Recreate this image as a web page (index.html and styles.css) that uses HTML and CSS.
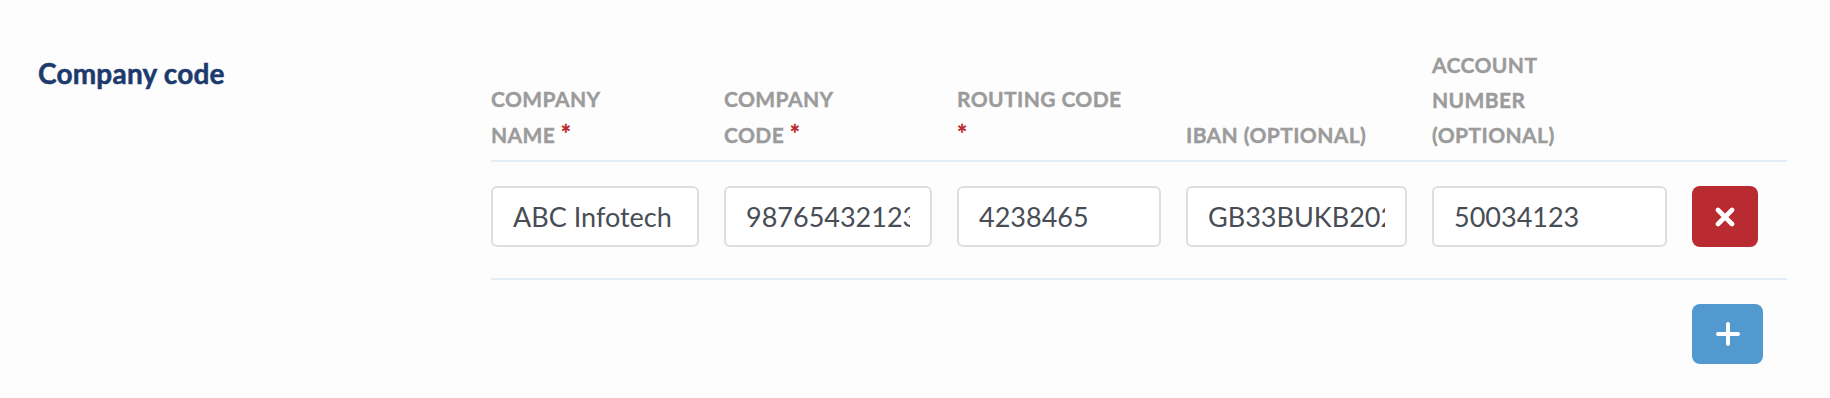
FILE: index.html
```html
<!DOCTYPE html>
<html lang="en">

<head>
    <meta charset="UTF-8">
    <meta name="viewport" content="width=device-width, initial-scale=1.0">
    <title>Company code</title>
    <link rel="stylesheet" href="styles.css">
</head>

<body>
    <div class="section">
        <h2 class="section-title">Company code</h2>
        <div class="codes">
            <div class="codes-head">
                <div class="label">Company<br>name <span class="req">*</span></div>
                <div class="label">Company<br>code <span class="req">*</span></div>
                <div class="label">Routing code<br><span class="req">*</span></div>
                <div class="label">IBAN (optional)</div>
                <div class="label">Account<br>number<br>(optional)</div>
                <div></div>
            </div>
            <div class="codes-row">
                <input class="field" type="text" value="ABC Infotech">
                <input class="field" type="text" value="987654321234">
                <input class="field" type="text" value="4238465">
                <input class="field" type="text" value="GB33BUKB20201555555555">
                <input class="field" type="text" value="50034123">
                <button class="btn btn-remove" type="button">
                    <svg width="20" height="20" viewBox="0 0 20 20">
                        <path d="M3 3 L17 17 M17 3 L3 17" stroke="#fff" stroke-width="4.6" stroke-linecap="round" fill="none"/>
                    </svg>
                </button>
            </div>
            <div class="codes-foot">
                <button class="btn btn-add" type="button">
                    <svg width="24" height="24" viewBox="0 0 24 24">
                        <path d="M2 12 H22 M12 2 V22" stroke="#fff" stroke-width="4" stroke-linecap="round" fill="none"/>
                    </svg>
                </button>
            </div>
        </div>
    </div>
</body>

</html>
```

FILE: styles.css
```css
body {
    margin: 0;
    background-color: #fdfdfd;
    font-family: Lato, "Open Sans", sans-serif;
}

.section {
    display: flex;
    align-items: flex-start;
    padding: 47px 0 0 38px;
}

.section-title {
    flex: 0 0 453px;
    margin: 10px 0 0;
    font-size: 28px;
    line-height: 1.2;
    font-weight: 700;
    letter-spacing: 0.2px;
    color: #1c3a6d;
    -webkit-text-stroke: 0.5px #1c3a6d;
}

.codes {
    width: 1296px;
}

.codes-head,
.codes-row,
.codes-foot {
    display: grid;
    grid-template-columns: 208px 208px 204px 221px 235px 66px;
    column-gap: 25px;
}

.codes-head {
    align-items: end;
    padding-bottom: 8px;
    border-bottom: 2px solid #e3edf7;
}

.label {
    font-size: 21px;
    line-height: 35px;
    font-weight: 700;
    letter-spacing: 0.4px;
    text-transform: uppercase;
    color: #9b9b9b;
    -webkit-text-stroke: 0.4px #9b9b9b;
}

.label .req {
    color: #b8282e;
    font-size: 24px;
    -webkit-text-stroke: 0.4px #b8282e;
}

.codes-row {
    align-items: center;
    padding: 24px 0 31px;
    border-bottom: 2px solid #e3edf7;
}

.field {
    width: 100%;
    height: 61px;
    box-sizing: border-box;
    padding: 0 20px;
    border: 2px solid #dedede;
    border-radius: 6px;
    background-color: #fff;
    font-family: Lato, "Open Sans", sans-serif;
    font-size: 27px;
    color: #484d55;
    outline: none;
}

.codes-foot {
    padding-top: 24px;
}

.btn {
    display: flex;
    align-items: center;
    justify-content: center;
    padding: 0;
    border: none;
    border-radius: 8px;
    cursor: pointer;
}

.btn-remove {
    width: 66px;
    height: 61px;
    background-color: #b92b30;
}

.btn-add {
    grid-column: 6;
    width: 71px;
    height: 60px;
    background-color: #5299cf;
}
```
